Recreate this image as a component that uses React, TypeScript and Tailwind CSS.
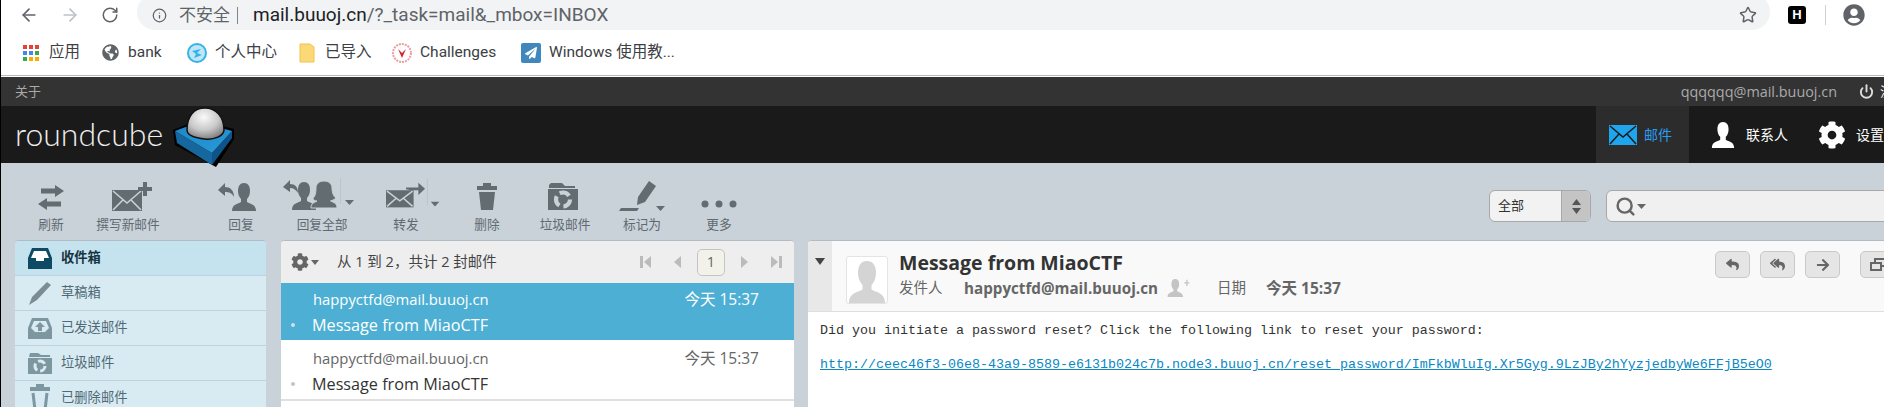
import { ArrowLeft, ArrowRight, Info, Power, RotateCw, Search, Star } from 'lucide-react'
import { FaArrowRight, FaCog, FaGlobeAmericas, FaPaperPlane, FaReply, FaReplyAll, FaUserCircle } from 'react-icons/fa'
import type { ReactNode } from 'react'

const GRAY = '#636c70'
const BG = '#c9d1d9'

const Person = ({ x = 0, y = 0, fill = GRAY }: { x?: number; y?: number; fill?: string }) => (
  <path
    transform={`translate(${x} ${y})`}
    fill={fill}
    d="M12 0c4 0 6 3 6 8 0 3-1 6-3 8v3c3 2 9 2 9 9H0c0-7 6-7 9-9v-3C7 14 6 11 6 8c0-5 2-8 6-8z"
  />
)

const Envelope = ({ x = 0, y = 0, w = 30, h = 20 }: { x?: number; y?: number; w?: number; h?: number }) => (
  <g transform={`translate(${x} ${y})`}>
    <rect width={w} height={h} fill={GRAY} />
    <path d={`M1 1L${w / 2} ${h * 0.62}L${w - 1} 1M1 ${h - 1}L${w * 0.38} ${h * 0.45}M${w - 1} ${h - 1}L${w * 0.62} ${h * 0.45}`} stroke={BG} strokeWidth="1.6" fill="none" />
  </g>
)

const Caret = ({ x, y, fill = GRAY }: { x: number; y: number; fill?: string }) => (
  <path d={`M${x} ${y}h9l-4.5 5z`} fill={fill} />
)

const Recycle = ({ cx, cy, r, color }: { cx: number; cy: number; r: number; color: string }) => (
  <circle cx={cx} cy={cy} r={r} fill="none" stroke={color} strokeWidth={r * 0.6} strokeDasharray={`${r * 1.5} ${r * 0.6}`} />
)

const RefreshIcon = () => (
  <svg width="28" height="30" viewBox="0 0 28 30" fill={GRAY}>
    <path d="M4 6.500h14V3l9 6-9 6v-3.500H4z" />
    <path d="M24 19.500H10V16l-9 6 9 6v-3.500h14z" />
  </svg>
)

const ComposeIcon = () => (
  <svg width="40" height="30" viewBox="0 0 40 30" fill={GRAY} className="ml-[8px]">
    <Envelope x={0} y={8} w={30} h={21} />
    <rect x="31" y="0" width="4" height="14" />
    <rect x="26" y="5" width="14" height="4" />
  </svg>
)

const ReplyIcon = () => (
  <svg width="40" height="30" viewBox="0 0 40 30" fill={GRAY} className="-ml-[6px]">
    <path d="M0 8l7-7v4c5 0 9 3 9 10-2-4-5-5-9-5v4z" />
    <Person x={14} y={1} />
  </svg>
)

const ReplyAllIcon = () => (
  <svg width="80" height="34" viewBox="0 0 80 34" fill={GRAY} className="ml-[2px]">
    <path d="M0 9l7-7v4c5 0 8 3 8 9-2-3-4-5-8-5v4z" />
    <Person x={9} y={4} />
    <path d="M41 3c5 0 8 3 8 7 0 5 2 9 4 10-3 3-7 3-5 3 3 2 6 2 6 7H28c0-5 3-5 6-7-2 0-4-1-4-3 2-1 3-5 3-10 0-4 3-7 8-7z" stroke={BG} strokeWidth="1" />
    <rect x="57" y="0" width="1" height="26" fill="#bcc5cd" />
    <Caret x={62} y={22} />
  </svg>
)

const ForwardIcon = () => (
  <svg width="62" height="34" viewBox="0 0 62 34" fill={GRAY} className="ml-[19px]">
    <Envelope x={0} y={12} w={29} h={18} />
    <path d="M21 9h13V4l7 6.500-7 6.500v-5H26l-5-1z" />
    <rect x="43" y="0" width="1" height="28" fill="#bcc5cd" />
    <Caret x={47} y={24} />
  </svg>
)

const TrashIcon = () => (
  <svg width="24" height="30" viewBox="0 0 24 30" fill={GRAY}>
    <path d="M8 1h8v3h6v4H2V4h6z" />
    <path d="M4 10h16l-2 18H6z" />
  </svg>
)

const JunkIcon = () => (
  <svg width="32" height="30" viewBox="0 0 32 30" fill={GRAY} className="-ml-[4px]">
    <path d="M4 1h11l3 3h10v2H2V3z" />
    <rect x="1" y="7" width="30" height="21" />
    <Recycle cx={16} cy={17.500} r={7} color={BG} />
  </svg>
)

const MarkIcon = () => (
  <svg width="46" height="32" viewBox="0 0 46 32" fill={GRAY}>
    <path d="M30 1l7 5-11 16-8 3 1-8z" />
    <path d="M2 28h18l-2 3H0z" />
    <Caret x={37} y={26} />
  </svg>
)

const MoreIcon = () => (
  <svg width="38" height="30" viewBox="0 0 38 30" fill={GRAY}>
    <circle cx="5" cy="22" r="3.500" />
    <circle cx="19" cy="22" r="3.500" />
    <circle cx="33" cy="22" r="3.500" />
  </svg>
)

const Logo = () => (
  <svg width="66" height="62" viewBox="0 0 66 62" className="relative z-10 ml-[8px] shrink-0">
    <defs>
      <radialGradient id="dome" cx="0.45" cy="0.3" r="0.75">
        <stop offset="0" stopColor="#fafafa" />
        <stop offset="0.55" stopColor="#c8c8c8" />
        <stop offset="1" stopColor="#777" />
      </radialGradient>
      <linearGradient id="top" x1="0" y1="0" x2="1" y2="1">
        <stop offset="0" stopColor="#1c87c9" />
        <stop offset="1" stopColor="#2a9ad8" />
      </linearGradient>
    </defs>
    <path d="M1 24L26 14 62 23V33L44 61 3 39z" fill="#000" />
    <path d="M3 25L40 47V59L5 37z" fill="#15679d" />
    <path d="M40 47L60 25V32L40 59z" fill="#0e5488" />
    <path d="M3 25L27 16 60 25 40 47z" fill="url(#top)" />
    <path d="M15 24C15 10 22 2 33 2S52 11 52 24C52 30 42 34 33 33 24 32 15 30 15 24z" fill="url(#dome)" stroke="#111" strokeWidth="1.500" />
  </svg>
)

const ToolButton = ({ w, label, children, ml = '' }: { w: string; label: string; children: ReactNode; ml?: string }) => (
  <div className={`flex flex-col items-center shrink-0 ${w} ${ml}`}>
    <div className="h-[32px] flex items-end justify-center w-full">{children}</div>
    <span className="text-[12.700px] leading-[14px] mt-[5px] text-[#5f6a70] whitespace-nowrap">{label}</span>
  </div>
)

const DraftIcon = () => (
  <svg width="26" height="26" viewBox="0 0 26 26" fill="#7c8c94">
    <path d="M20 2l4 3-14 15-8 5 3-8z" />
  </svg>
)

const FolderRow = ({ icon, label, selected = false }: { icon: ReactNode; label: string; selected?: boolean }) => (
  <div
    className={`flex items-center h-[35px] pl-[12px] border-b border-[#bcd2dd] ${selected ? 'bg-[#c5e2ef] font-bold text-[#15343f]' : 'text-[#4f6a76]'}`}
  >
    <div className="w-[26px] flex justify-center shrink-0">{icon}</div>
    <span className="ml-[8px] text-[13.300px]">{label}</span>
  </div>
)

const MailRow = ({ selected = false }: { selected?: boolean }) => (
  <div className={`h-[59px] border-b-2 pl-[10px] pr-[35px] ${selected ? 'bg-[#4dafd3] border-white text-white' : 'bg-white border-[#e0e0e0] text-[#444]'}`}>
    <div className="flex justify-between pl-[22px] pt-[6px] text-[14.800px] leading-[20px]">
      <span className={selected ? 'text-white' : 'text-[#666]'}>happyctfd@mail.buuoj.cn</span>
      <span className={`text-[15.500px] ${selected ? 'text-white' : 'text-[#666]'}`}>今天 15:37</span>
    </div>
    <div className="flex items-center mt-[6px] text-[16.200px] leading-[20px]">
      <span className={`w-[4px] h-[4px] rounded-full mr-[17px] ${selected ? 'bg-[#c5e2ef]' : 'bg-[#c4c4c4]'}`} />
      <span className={selected ? 'text-white' : 'text-[#333]'}>Message from MiaoCTF</span>
    </div>
  </div>
)

const SmallButton = ({ children, ml = '' }: { children: ReactNode; ml?: string }) => (
  <div className={`w-[35px] h-[27px] shrink-0 rounded-[5px] border border-[#c9c9c9] bg-[#e5e5e5] flex items-center justify-center ${ml}`}>
    {children}
  </div>
)

const Bookmark = ({ icon, label, w }: { icon: ReactNode; label: string; w: string }) => (
  <div className={`flex items-center shrink-0 ${w}`}>
    <div className="w-[20px] flex justify-center shrink-0">{icon}</div>
    <span className="ml-[8px] text-[15.500px] text-[#3c4043] whitespace-nowrap">{label}</span>
  </div>
)

const AppsIcon = () => {
  const colors = ['#e94235', '#e94235', '#e94235', '#4285f4', '#4285f4', '#34a853', '#34a853', '#f9ab00', '#f9ab00']
  return (
    <div className="grid grid-cols-3 gap-[2px] w-[16px]">
      {colors.map((c, i) => (
        <svg key={i} width="4" height="4" viewBox="0 0 4 4">
          <rect width="4" height="4" fill={c} />
        </svg>
      ))}
    </div>
  )
}

export default function App() {
  return (
    <div className="w-[1884px] h-[407px] overflow-hidden border-l border-black bg-[#c9d1d9] font-['Open_Sans','Noto_Sans_CJK_SC',sans-serif] flex flex-col">
      {/* browser chrome */}
      <div className="h-[75px] bg-white shrink-0 flex flex-col">
        <div className="h-[30px] flex items-center shrink-0">
          <ArrowLeft size={20} color="#5f6368" className="ml-[18px]" />
          <ArrowRight size={20} color="#bdc1c6" className="ml-[21px]" />
          <RotateCw size={18} color="#5f6368" className="ml-[21px]" />
          <div className="ml-[18px] w-[1633px] h-[36px] -mt-[6px] pt-[6px] bg-[#f1f3f4] rounded-r-[18px] rounded-l-[18px] flex items-center shrink-0">
            <Info size={15} color="#5f6368" className="ml-[15px]" />
            <span className="ml-[12px] text-[17px] text-[#5f6368]">不安全</span>
            <span className="ml-[7px] w-px h-[17px] bg-[#80868b]" />
            <span className="ml-[15px] font-['Roboto',sans-serif] text-[19px] text-[#202124]">mail.buuoj.cn</span>
            <span className="font-['Roboto',sans-serif] text-[19px] text-[#5f6368]">/?_task=mail&amp;_mbox=INBOX</span>
            <Star size={18} color="#5f6368" className="ml-auto mr-[13px]" />
          </div>
          <div className="ml-[18px] w-[18px] h-[18px] rounded-[3px] bg-black text-white text-[13px] font-bold flex items-center justify-center font-['Liberation_Sans',sans-serif]">
            H
          </div>
          <span className="ml-[19px] w-px h-[20px] bg-[#d0d0d0]" />
          <FaUserCircle size={22} color="#5f6368" className="ml-[17px] shrink-0" />
        </div>
        <div className="flex-1 flex items-center pl-[20px] font-['Roboto','Noto_Sans_CJK_SC',sans-serif]">
          <Bookmark w="w-[79px]" label="应用" icon={<AppsIcon />} />
          <Bookmark w="w-[87px]" label="bank" icon={<FaGlobeAmericas size={17} color="#5f6368" />} />
          <Bookmark
            w="w-[110px]"
            label="个人中心"
            icon={
              <svg width="20" height="20" viewBox="0 0 20 20">
                <circle cx="10" cy="10" r="9" fill="#bfe6f7" stroke="#35b2e6" strokeWidth="2" />
                <path d="M5 8l9-2-4 4 5 2-8 3 2-4z" fill="#35b2e6" />
              </svg>
            }
          />
          <Bookmark
            w="w-[95px]"
            label="已导入"
            icon={
              <svg width="16" height="20" viewBox="0 0 16 20">
                <path d="M1 1h10l4 3v15H1z" fill="#fbd976" stroke="#f0c350" />
              </svg>
            }
          />
          <Bookmark
            w="w-[129px]"
            label="Challenges"
            icon={
              <svg width="20" height="20" viewBox="0 0 20 20">
                <circle cx="10" cy="10" r="9" fill="#fff" stroke="#e9a0a0" strokeWidth="2" strokeDasharray="2 1" />
                <path d="M6 6l4 9 4-9-4 4z" fill="#d9252a" />
              </svg>
            }
          />
          <Bookmark
            w="w-[140px]"
            label="Windows 使用教..."
            icon={
              <div className="w-[20px] h-[20px] rounded-[2px] bg-[#3f87bd] flex items-center justify-center">
                <FaPaperPlane size={12} color="#fff" />
              </div>
            }
          />
        </div>
      </div>
      <div className="h-px bg-[#b8b8b8] shrink-0" />
      <div className="h-px bg-white shrink-0" />

      {/* top line */}
      <div className="h-[29px] bg-[#333] shrink-0 flex items-center text-[13px] text-[#aaa]">
        <span className="ml-[14px]">关于</span>
        <span className="ml-auto text-[14.400px]">qqqqqq@mail.buuoj.cn</span>
        <Power size={15} color="#ddd" strokeWidth={3} className="ml-[22px] shrink-0" />
        <span className="ml-[6px] w-[4px] overflow-hidden text-white whitespace-nowrap">注销</span>
      </div>

      {/* header */}
      <div className="h-[57px] bg-[#1a1a1a] shrink-0 flex items-start">
        <span className="ml-[14px] mt-[9px] text-[32px] leading-[38px] font-['Lato',sans-serif] font-light text-[#eee] w-[149px] whitespace-nowrap">
          roundcube
        </span>
        <Logo />
        <div className="ml-[1358px] h-full w-[93px] bg-[#2c2c2c] flex items-center pl-[13px] shrink-0">
          <svg width="28" height="20" viewBox="0 0 28 20">
            <rect width="28" height="20" fill="#1ea5ee" />
            <path d="M1 1L14 12 27 1M1 19L10 9M27 19L18 9" stroke="#1a1a1a" strokeWidth="1.500" fill="none" />
          </svg>
          <span className="ml-[7px] text-[14px] text-[#2a9df0]">邮件</span>
        </div>
        <div className="h-full flex items-center pl-[21px] shrink-0">
          <svg width="26" height="26" viewBox="0 0 24 28">
            <Person fill="#fff" />
          </svg>
          <span className="ml-[10px] text-[14px] text-white">联系人</span>
        </div>
        <div className="h-full flex items-center pl-[30px] shrink-0">
          <FaCog size={28} color="#fff" />
          <span className="ml-[10px] text-[14px] text-white whitespace-nowrap">设置</span>
        </div>
      </div>

      {/* toolbar */}
      <div className="h-[77px] shrink-0 flex items-start pl-[15px] pt-[17px]">
        <ToolButton w="w-[70px]" label="刷新"><RefreshIcon /></ToolButton>
        <ToolButton w="w-[84px]" label="撰写新邮件"><ComposeIcon /></ToolButton>
        <ToolButton w="w-[72px]" ml="ml-[35px]" label="回复"><ReplyIcon /></ToolButton>
        <ToolButton w="w-[90px]" label="回复全部"><ReplyAllIcon /></ToolButton>
        <ToolButton w="w-[78px]" label="转发"><ForwardIcon /></ToolButton>
        <ToolButton w="w-[84px]" label="删除"><TrashIcon /></ToolButton>
        <ToolButton w="w-[72px]" label="垃圾邮件"><JunkIcon /></ToolButton>
        <ToolButton w="w-[82px]" label="标记为"><MarkIcon /></ToolButton>
        <ToolButton w="w-[72px]" label="更多"><MoreIcon /></ToolButton>
        <div className="ml-[734px] mt-[10px] w-[102px] h-[32px] shrink-0 rounded-[6px] border border-[#a8a8a8] bg-[#f2f2f2] flex overflow-hidden">
          <span className="flex-1 pl-[8px] text-[13px] leading-[28px] text-[#333]">全部</span>
          <div className="w-[29px] bg-[#c4c4c4] border-l border-[#a8a8a8] flex flex-col items-center justify-center gap-[3px]">
            <svg width="9" height="6" viewBox="0 0 9 6"><path d="M4.500 0L9 6H0z" fill="#555" /></svg>
            <svg width="9" height="6" viewBox="0 0 9 6"><path d="M4.500 6L9 0H0z" fill="#555" /></svg>
          </div>
        </div>
        <div className="ml-[15px] mt-[10px] w-[400px] h-[32px] shrink-0 rounded-[6px] border border-[#a8a8a8] bg-[#f0f0f0] flex items-center pl-[8px]">
          <Search size={21} color="#666" strokeWidth={2.8} />
          <svg width="9" height="5" viewBox="0 0 9 5" className="ml-[1px] mt-[1px]"><path d="M0 0h9L4.500 5z" fill="#666" /></svg>
        </div>
      </div>

      {/* panels */}
      <div className="flex-1 flex pl-[14px] items-stretch">
        <div className="w-[251px] shrink-0 rounded-t-[4px] border-t border-[#b0bbc4] bg-[#d8eaf2] overflow-hidden">
          <FolderRow
            selected
            label="收件箱"
            icon={
              <svg width="24" height="21" viewBox="0 0 24 21">
                <path d="M4 0h16l4 10v11H0V10z" fill="#0e4a63" />
                <path d="M6 3h12l3 7h-5v3H8v-3H3z" fill="#fff" />
              </svg>
            }
          />
          <FolderRow label="草稿箱" icon={<DraftIcon />} />
          <FolderRow
            label="已发送邮件"
            icon={
              <svg width="24" height="21" viewBox="0 0 24 21">
                <path d="M4 0h16l4 10v11H0V10z" fill="#7c979f" />
                <path d="M6 3h12l3 7-4 4H7l-4-4z" fill="#d8eaf2" />
                <path d="M12 4l5 5h-3v4h-4V9H7z" fill="#7c979f" />
              </svg>
            }
          />
          <FolderRow
            label="垃圾邮件"
            icon={
              <svg width="24" height="21" viewBox="0 0 24 21" fill="#7c979f">
                <path d="M2 0h8l3 2h9v2H1z" />
                <rect y="5" width="24" height="16" />
                <Recycle cx={12} cy={13} r={5} color="#d8eaf2" />
              </svg>
            }
          />
          <FolderRow
            label="已删除邮件"
            icon={
              <svg width="24" height="28" viewBox="0 0 24 28" fill="none">
                <path d="M8 0h8v3h6v4H2V3h6z" fill="#7c979f" />
                <path d="M5 9l2 17h10l2-17" stroke="#7c979f" strokeWidth="3" />
              </svg>
            }
          />
        </div>

        <div className="ml-[15px] w-[513px] shrink-0 rounded-t-[4px] border-t border-[#b0bbc4] bg-white overflow-hidden">
          <div className="h-[42px] bg-[#eeeeef] flex items-center pl-[10px] pr-[12px] text-[14.500px] text-[#444]">
            <FaCog size={18} color="#666" />
            <svg width="8" height="5" viewBox="0 0 8 5" className="ml-[2px]"><path d="M0 0h8L4 5z" fill="#666" /></svg>
            <span className="ml-[18px]">从 1 到 2，共计 2 封邮件</span>
            <div className="ml-auto flex items-center">
              <svg width="11" height="12" viewBox="0 0 11 12" fill="#bbb"><rect width="3" height="12" /><path d="M11 0v12L4 6z" /></svg>
              <svg width="7" height="12" viewBox="0 0 7 12" fill="#bbb" className="ml-[23px]"><path d="M7 0v12L0 6z" /></svg>
              <div className="ml-[16px] w-[28px] h-[27px] border border-[#c4c4c4] rounded-[5px] bg-[#f2f2ea] flex items-center justify-center text-[#666]">1</div>
              <svg width="7" height="12" viewBox="0 0 7 12" fill="#bbb" className="ml-[16px]"><path d="M0 0v12l7-6z" /></svg>
              <svg width="11" height="12" viewBox="0 0 11 12" fill="#bbb" className="ml-[23px]"><rect x="8" width="3" height="12" /><path d="M0 0v12l7-6z" /></svg>
            </div>
          </div>
          <MailRow selected />
          <MailRow />
        </div>

        <div className="ml-[14px] w-[1200px] shrink-0 rounded-t-[4px] border-t border-[#b0bbc4] bg-white overflow-hidden">
          <div className="h-[71px] bg-[#f9f9f9] border-b border-[#dfdfdf] flex">
            <div className="w-[24px] shrink-0 bg-[#e8e8e8] flex justify-center pt-[17px]">
              <svg width="10" height="7" viewBox="0 0 10 7"><path d="M0 0h10L5 7z" fill="#444" /></svg>
            </div>
            <div className="ml-[14px] mt-[15px] w-[42px] h-[48px] shrink-0 rounded-[3px] border border-[#e4e4e4] bg-white flex items-end justify-center">
              <svg width="38" height="42" viewBox="0 0 24 28">
                <Person fill="#d4d4d4" />
              </svg>
            </div>
            <div className="ml-[11px] w-[816px] shrink-0">
              <div className="mt-[10px] text-[19.500px] leading-[24px] font-bold text-[#333]">Message from MiaoCTF</div>
              <div className="mt-[3px] flex items-center text-[14.500px] leading-[20px] text-[#666]">
                <span className="w-[65px]">发件人</span>
                <span className="w-[203px] text-[15.200px] font-bold whitespace-nowrap">happyctfd@mail.buuoj.cn</span>
                <svg width="23" height="18" viewBox="0 0 34 28" className="shrink-0">
                  <Person fill="#c4c4c4" />
                  <path d="M26 5h3V1h2v4h3v2h-3v4h-2V7h-3z" fill="#c4c4c4" />
                </svg>
                <span className="ml-[27px] w-[49px]">日期</span>
                <span className="text-[15.500px] font-bold whitespace-nowrap">今天 15:37</span>
              </div>
            </div>
            <div className="flex items-start pt-[10px] gap-[10px]">
              <SmallButton><FaReply size={13} color="#666" /></SmallButton>
              <SmallButton><FaReplyAll size={15} color="#666" /></SmallButton>
              <SmallButton><FaArrowRight size={14} color="#666" /></SmallButton>
              <SmallButton ml="ml-[10px]">
                <svg width="16" height="13" viewBox="0 0 16 13" fill="none" stroke="#666" strokeWidth="2">
                  <rect x="5" y="1" width="10" height="7" />
                  <rect x="1" y="5" width="10" height="7" fill="#e5e5e5" />
                </svg>
              </SmallButton>
            </div>
          </div>
          <div className="pl-[12px] pt-[10px] font-['Liberation_Mono',monospace] text-[13.330px] leading-[18px] text-[#333]">
            <div>Did you initiate a password reset? Click the following link to reset your password:</div>
            <a className="block mt-[16px] text-[#0a88c4] underline whitespace-nowrap">
              http://ceec46f3-06e8-43a9-8589-e6131b024c7b.node3.buuoj.cn/reset_password/ImFkbWluIg.Xr5Gyg.9LzJBy2hYyzjedbyWe6FFjB5eO0
            </a>
          </div>
        </div>
      </div>
    </div>
  )
}
